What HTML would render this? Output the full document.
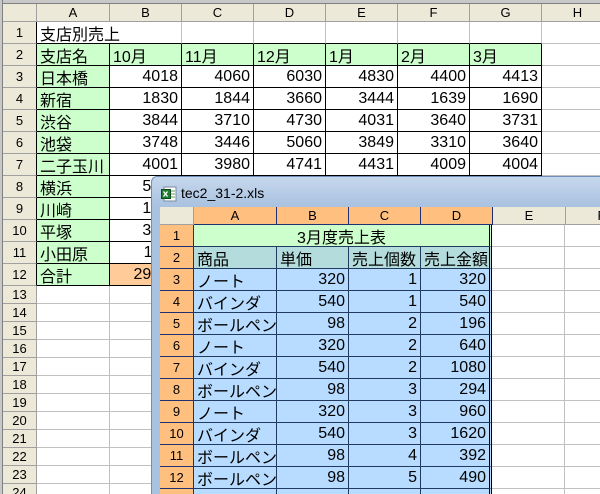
<!DOCTYPE html>
<html style="overflow:hidden;width:600px;height:494px"><head><meta charset="utf-8">
<style>
*{margin:0;padding:0;box-sizing:border-box}
body{width:600px;height:494px;overflow:hidden;background:#fff;position:relative;font-family:"Liberation Sans","Noto Sans CJK JP",sans-serif;font-size:16px;color:#000}
.s{position:absolute}
.r{display:flex}
.c{flex:none;border-right:1px solid #c0c0c0;border-bottom:1px solid #c0c0c0;overflow:hidden;white-space:nowrap;padding:0 3px;display:flex;align-items:center}
.h{background:#ece9d8;border-color:#a0a0a0;justify-content:center;font-size:13px}
.n{justify-content:flex-end}
.k{border-right-color:#000;border-bottom-color:#000}
.g{background:#ccffcc}
.o{background:#ffc07f;border-color:#1f2f6f;justify-content:center;font-size:13px}
.bl{background:#b7dcff;border-color:#203a60}
.tl{background:#b4dcdc;border-color:#203a60}
</style></head><body>
<div class="s" style="left:0;top:0;width:600px;height:4px;background:#c8c8c8;border-bottom:1px solid #808080"></div>
<div class="s" style="left:0;top:0;width:3px;height:494px;background:#c8c8c8;border-right:1px solid #808080"></div>
<div class="s" style="left:3px;top:4px;width:597px;height:490px;overflow:hidden">
<div class="r" style="height:18px"><div class="c h" style="width:34px"></div><div class="c h" style="width:73px">A</div><div class="c h" style="width:72px">B</div><div class="c h" style="width:72px">C</div><div class="c h" style="width:72px">D</div><div class="c h" style="width:72px">E</div><div class="c h" style="width:72px">F</div><div class="c h" style="width:72px">G</div><div class="c h" style="width:72px">H</div></div>
<div class="r" style="height:22px"><div class="c h" style="width:34px;border-right-color:#000">1</div><div class="c" style="width:73px;border-right:none;border-bottom-color:#000;overflow:visible">支店別売上</div><div class="c" style="width:72px;border-bottom-color:#000"></div><div class="c" style="width:72px;border-bottom-color:#000"></div><div class="c" style="width:72px;border-bottom-color:#000"></div><div class="c" style="width:72px;border-bottom-color:#000"></div><div class="c" style="width:72px;border-bottom-color:#000"></div><div class="c" style="width:72px;border-bottom-color:#000"></div><div class="c" style="width:72px"></div></div>
<div class="r" style="height:22px"><div class="c h" style="width:34px;border-right-color:#000">2</div><div class="c k g" style="width:73px">支店名</div><div class="c k g" style="width:72px">10月</div><div class="c k g" style="width:72px">11月</div><div class="c k g" style="width:72px">12月</div><div class="c k g" style="width:72px">1月</div><div class="c k g" style="width:72px">2月</div><div class="c k g" style="width:72px">3月</div><div class="c" style="width:72px"></div></div>
<div class="r" style="height:22px"><div class="c h" style="width:34px;border-right-color:#000">3</div><div class="c k g" style="width:73px">日本橋</div><div class="c k n" style="width:72px">4018</div><div class="c k n" style="width:72px">4060</div><div class="c k n" style="width:72px">6030</div><div class="c k n" style="width:72px">4830</div><div class="c k n" style="width:72px">4400</div><div class="c k n" style="width:72px">4413</div><div class="c" style="width:72px"></div></div>
<div class="r" style="height:22px"><div class="c h" style="width:34px;border-right-color:#000">4</div><div class="c k g" style="width:73px">新宿</div><div class="c k n" style="width:72px">1830</div><div class="c k n" style="width:72px">1844</div><div class="c k n" style="width:72px">3660</div><div class="c k n" style="width:72px">3444</div><div class="c k n" style="width:72px">1639</div><div class="c k n" style="width:72px">1690</div><div class="c" style="width:72px"></div></div>
<div class="r" style="height:22px"><div class="c h" style="width:34px;border-right-color:#000">5</div><div class="c k g" style="width:73px">渋谷</div><div class="c k n" style="width:72px">3844</div><div class="c k n" style="width:72px">3710</div><div class="c k n" style="width:72px">4730</div><div class="c k n" style="width:72px">4031</div><div class="c k n" style="width:72px">3640</div><div class="c k n" style="width:72px">3731</div><div class="c" style="width:72px"></div></div>
<div class="r" style="height:22px"><div class="c h" style="width:34px;border-right-color:#000">6</div><div class="c k g" style="width:73px">池袋</div><div class="c k n" style="width:72px">3748</div><div class="c k n" style="width:72px">3446</div><div class="c k n" style="width:72px">5060</div><div class="c k n" style="width:72px">3849</div><div class="c k n" style="width:72px">3310</div><div class="c k n" style="width:72px">3640</div><div class="c" style="width:72px"></div></div>
<div class="r" style="height:22px"><div class="c h" style="width:34px;border-right-color:#000">7</div><div class="c k g" style="width:73px">二子玉川</div><div class="c k n" style="width:72px">4001</div><div class="c k n" style="width:72px">3980</div><div class="c k n" style="width:72px">4741</div><div class="c k n" style="width:72px">4431</div><div class="c k n" style="width:72px">4009</div><div class="c k n" style="width:72px">4004</div><div class="c" style="width:72px"></div></div>
<div class="r" style="height:22px"><div class="c h" style="width:34px;border-right-color:#000">8</div><div class="c k g" style="width:73px">横浜</div><div class="c k n" style="width:72px">5421</div></div>
<div class="r" style="height:22px"><div class="c h" style="width:34px;border-right-color:#000">9</div><div class="c k g" style="width:73px">川崎</div><div class="c k n" style="width:72px">1932</div></div>
<div class="r" style="height:22px"><div class="c h" style="width:34px;border-right-color:#000">10</div><div class="c k g" style="width:73px">平塚</div><div class="c k n" style="width:72px">3622</div></div>
<div class="r" style="height:22px"><div class="c h" style="width:34px;border-right-color:#000">11</div><div class="c k g" style="width:73px">小田原</div><div class="c k n" style="width:72px">1133</div></div>
<div class="r" style="height:22px"><div class="c h" style="width:34px;border-right-color:#000">12</div><div class="c k g" style="width:73px">合計</div><div class="c k n" style="width:72px;background:#ffcc99">29876</div></div>
<div class="r" style="height:18px"><div class="c h" style="width:34px">13</div><div class="c" style="width:73px"></div><div class="c" style="width:72px"></div></div>
<div class="r" style="height:18px"><div class="c h" style="width:34px">14</div><div class="c" style="width:73px"></div><div class="c" style="width:72px"></div></div>
<div class="r" style="height:18px"><div class="c h" style="width:34px">15</div><div class="c" style="width:73px"></div><div class="c" style="width:72px"></div></div>
<div class="r" style="height:18px"><div class="c h" style="width:34px">16</div><div class="c" style="width:73px"></div><div class="c" style="width:72px"></div></div>
<div class="r" style="height:18px"><div class="c h" style="width:34px">17</div><div class="c" style="width:73px"></div><div class="c" style="width:72px"></div></div>
<div class="r" style="height:18px"><div class="c h" style="width:34px">18</div><div class="c" style="width:73px"></div><div class="c" style="width:72px"></div></div>
<div class="r" style="height:18px"><div class="c h" style="width:34px">19</div><div class="c" style="width:73px"></div><div class="c" style="width:72px"></div></div>
<div class="r" style="height:18px"><div class="c h" style="width:34px">20</div><div class="c" style="width:73px"></div><div class="c" style="width:72px"></div></div>
<div class="r" style="height:18px"><div class="c h" style="width:34px">21</div><div class="c" style="width:73px"></div><div class="c" style="width:72px"></div></div>
<div class="r" style="height:18px"><div class="c h" style="width:34px">22</div><div class="c" style="width:73px"></div><div class="c" style="width:72px"></div></div>
<div class="r" style="height:18px"><div class="c h" style="width:34px">23</div><div class="c" style="width:73px"></div><div class="c" style="width:72px"></div></div>
<div class="r" style="height:18px"><div class="c h" style="width:34px">24</div><div class="c" style="width:73px"></div><div class="c" style="width:72px"></div></div>
</div>
<div class="s" style="left:151px;top:176px;width:449px;height:318px;border:1px solid #6f8fb8;border-right:none;border-bottom:none;border-radius:6px 0 0 0;background:linear-gradient(#c6d7ec,#a9c2e0 30px,#a9c2e0)">
<svg class="s" style="left:9px;top:9px" width="16" height="16" viewBox="0 0 16 16"><rect x="3" y="1" width="12" height="14" fill="#fff" stroke="#7a8aa0"/><rect x="0.5" y="3.5" width="9" height="9" fill="#1e7a2e" stroke="#0f4d1a"/><path d="M2.5 5.5l4 5M6.5 5.5l-4 5" stroke="#fff" stroke-width="1.4"/><path d="M10 5h4M10 8h4M10 11h4" stroke="#6a9a6a"/></svg>
<div class="s" style="left:29px;top:8px;font-size:14px">tec2_31-2.xls</div>
</div>
<div class="s" style="left:160px;top:207px;width:440px;height:287px;background:#fff;overflow:hidden">
<div class="r" style="height:18px"><div class="c h" style="width:34px"></div><div class="c o" style="width:83px">A</div><div class="c o" style="width:72px">B</div><div class="c o" style="width:72px">C</div><div class="c o" style="width:72px">D</div><div class="c h" style="width:73px">E</div><div class="c h" style="width:72px">F</div></div>
<div class="r" style="height:22px"><div class="c o" style="width:34px">1</div><div class="c" style="width:298px;background:#ccffcc;border-color:#203a60;justify-content:center;border-right:3px double #000">3月度売上表</div><div class="c" style="width:73px"></div><div class="c" style="width:72px"></div></div>
<div class="r" style="height:22px"><div class="c o" style="width:34px">2</div><div class="c tl" style="width:83px">商品</div><div class="c tl" style="width:72px">単価</div><div class="c tl" style="width:72px">売上個数</div><div class="c tl" style="width:71px;border-right:3px double #000">売上金額</div><div class="c" style="width:73px"></div><div class="c" style="width:72px"></div></div>
<div class="r" style="height:22px"><div class="c o" style="width:34px">3</div><div class="c bl" style="width:83px">ノート</div><div class="c bl n" style="width:72px">320</div><div class="c bl n" style="width:72px">1</div><div class="c bl n" style="width:71px;border-right:3px double #000">320</div><div class="c" style="width:73px"></div><div class="c" style="width:72px"></div></div>
<div class="r" style="height:22px"><div class="c o" style="width:34px">4</div><div class="c bl" style="width:83px">バインダ</div><div class="c bl n" style="width:72px">540</div><div class="c bl n" style="width:72px">1</div><div class="c bl n" style="width:71px;border-right:3px double #000">540</div><div class="c" style="width:73px"></div><div class="c" style="width:72px"></div></div>
<div class="r" style="height:22px"><div class="c o" style="width:34px">5</div><div class="c bl" style="width:83px">ボールペン</div><div class="c bl n" style="width:72px">98</div><div class="c bl n" style="width:72px">2</div><div class="c bl n" style="width:71px;border-right:3px double #000">196</div><div class="c" style="width:73px"></div><div class="c" style="width:72px"></div></div>
<div class="r" style="height:22px"><div class="c o" style="width:34px">6</div><div class="c bl" style="width:83px">ノート</div><div class="c bl n" style="width:72px">320</div><div class="c bl n" style="width:72px">2</div><div class="c bl n" style="width:71px;border-right:3px double #000">640</div><div class="c" style="width:73px"></div><div class="c" style="width:72px"></div></div>
<div class="r" style="height:22px"><div class="c o" style="width:34px">7</div><div class="c bl" style="width:83px">バインダ</div><div class="c bl n" style="width:72px">540</div><div class="c bl n" style="width:72px">2</div><div class="c bl n" style="width:71px;border-right:3px double #000">1080</div><div class="c" style="width:73px"></div><div class="c" style="width:72px"></div></div>
<div class="r" style="height:22px"><div class="c o" style="width:34px">8</div><div class="c bl" style="width:83px">ボールペン</div><div class="c bl n" style="width:72px">98</div><div class="c bl n" style="width:72px">3</div><div class="c bl n" style="width:71px;border-right:3px double #000">294</div><div class="c" style="width:73px"></div><div class="c" style="width:72px"></div></div>
<div class="r" style="height:22px"><div class="c o" style="width:34px">9</div><div class="c bl" style="width:83px">ノート</div><div class="c bl n" style="width:72px">320</div><div class="c bl n" style="width:72px">3</div><div class="c bl n" style="width:71px;border-right:3px double #000">960</div><div class="c" style="width:73px"></div><div class="c" style="width:72px"></div></div>
<div class="r" style="height:22px"><div class="c o" style="width:34px">10</div><div class="c bl" style="width:83px">バインダ</div><div class="c bl n" style="width:72px">540</div><div class="c bl n" style="width:72px">3</div><div class="c bl n" style="width:71px;border-right:3px double #000">1620</div><div class="c" style="width:73px"></div><div class="c" style="width:72px"></div></div>
<div class="r" style="height:22px"><div class="c o" style="width:34px">11</div><div class="c bl" style="width:83px">ボールペン</div><div class="c bl n" style="width:72px">98</div><div class="c bl n" style="width:72px">4</div><div class="c bl n" style="width:71px;border-right:3px double #000">392</div><div class="c" style="width:73px"></div><div class="c" style="width:72px"></div></div>
<div class="r" style="height:22px"><div class="c o" style="width:34px">12</div><div class="c bl" style="width:83px">ボールペン</div><div class="c bl n" style="width:72px">98</div><div class="c bl n" style="width:72px">5</div><div class="c bl n" style="width:71px;border-right:3px double #000">490</div><div class="c" style="width:73px"></div><div class="c" style="width:72px"></div></div>
<div class="r" style="height:22px"><div class="c o" style="width:34px">13</div><div class="c bl" style="width:83px"></div><div class="c bl" style="width:72px"></div><div class="c bl" style="width:72px"></div><div class="c bl" style="width:71px;border-right:3px double #000"></div><div class="c" style="width:73px"></div></div>
</div>
</body></html>
